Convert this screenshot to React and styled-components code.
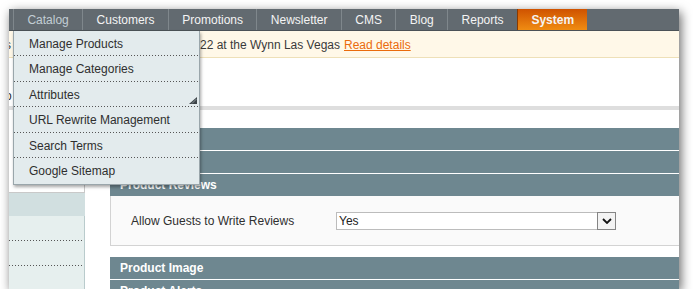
import React from 'react';
import styled, { createGlobalStyle } from 'styled-components';

const GlobalStyle = createGlobalStyle`
  html, body {
    margin: 0;
    padding: 0;
    background: #ffffff;
  }
  body {
    font-family: "Liberation Sans", Arial, sans-serif;
    font-size: 12px;
    color: #2f2f2f;
  }
`;

const Window = styled.div`
  margin: 9px 0 0 9px;
  width: 670px;
  height: 280px;
  overflow: hidden;
  background: #ffffff;
  box-shadow: 2px 3px 10px rgba(0, 0, 0, 0.6);
`;

const NavBar = styled.div`
  display: flex;
  height: 21px;
  background: #626a70;
  border-bottom: 1px solid #4b5257;
`;

const NavStub = styled.div`
  width: 4px;
`;

const NavItem = styled.div`
  display: flex;
  align-items: center;
  padding: 0 13.4px;
  border-left: 1px solid ${p => (p.$active ? '#8a3a00' : '#7f878c')};
  color: ${p => (p.$muted ? '#c3ced5' : '#f4f4f4')};
  font-weight: ${p => (p.$active ? 'bold' : 'normal')};
  background: ${p => (p.$active ? 'linear-gradient(#cf5200, #f08c12)' : 'transparent')};
  white-space: nowrap;
`;

const Body = styled.div`
  position: relative;
`;

const Notice = styled.div`
  display: flex;
  align-items: center;
  height: 27px;
  padding-top: 1px;
  box-sizing: border-box;
  background: #fff8e8;
  border-bottom: 1px solid #eee0b8;
  color: #3a3a3a;
  white-space: nowrap;
`;

const Hidden = styled.span`
  width: ${p => p.$width || 191}px;
  overflow: hidden;
  text-indent: -4px;
`;

const NoticeLink = styled.a`
  margin-left: 4px;
  color: #ea6b0c;
  text-decoration: underline;
`;

const Toolbar = styled.div`
  height: 48px;
  display: flex;
  align-items: flex-end;
  padding-bottom: 3px;
  box-sizing: border-box;
  overflow: hidden;
`;

const Divider = styled.div`
  height: 4px;
  background: #dedede;
`;

const Columns = styled.div`
  display: grid;
  grid-template-columns: 76px 1fr;
  column-gap: 25px;
`;

const Side = styled.div`
  display: flex;
  flex-direction: column;
`;

const SideBox = styled.div`
  height: 82px;
  border-right: 1px solid #c9c9c9;
  border-bottom: 1px solid #c9c9c9;
`;

const SideTitle = styled.div`
  height: 23px;
  background: #d1dfe0;
`;

const dots = `
  background-image: repeating-linear-gradient(to right, #555 0 1px, transparent 1px 3px);
  background-size: 100% 1px;
  background-repeat: no-repeat;
  background-position: left bottom;
`;

const SideItem = styled.div`
  height: 25px;
  background-color: #e6efee;
  border-right: 1px solid #b9cbcc;
  ${p => (p.$dotted ? dots : '')}
`;

const Main = styled.div`
  padding-top: 18px;
  display: flex;
  flex-direction: column;
`;

const SectionHead = styled.div`
  height: 22px;
  line-height: 22px;
  margin-top: ${p => (p.$gap ? '11px' : '0')};
  margin-bottom: 1px;
  padding-left: 10px;
  background: #6e8790;
  color: #ffffff;
  font-weight: bold;
  flex-shrink: 0;
`;

const SectionBody = styled.div`
  height: 49px;
  margin-top: -1px;
  background: #fafafa;
  border-left: 1px solid #d3d3d3;
  border-bottom: 1px solid #d3d3d3;
  display: flex;
  align-items: center;
  padding-left: 20px;
  flex-shrink: 0;
`;

const Label = styled.div`
  width: 205px;
  color: #2f2f2f;
`;

const Select = styled.div`
  width: 280px;
  height: 18px;
  box-sizing: border-box;
  border: 1px solid #bcbcbc;
  background: #ffffff;
  display: flex;
  align-items: center;
  justify-content: space-between;
  padding-left: 2px;
  color: #222;
`;

const SelectButton = styled.div`
  width: 19px;
  height: 18px;
  margin: -1px -1px -1px 0;
  box-sizing: border-box;
  border: 1px solid #858585;
  background: #f3f3f3;
  display: flex;
  align-items: center;
  justify-content: center;
`;

const Menu = styled.div`
  position: absolute;
  top: 0;
  left: 4px;
  width: 187px;
  height: 154px;
  box-sizing: border-box;
  background: #e3ebed;
  border: 1px solid #9aa6ab;
  border-top: none;
  box-shadow: 1px 2px 3px rgba(0, 0, 0, 0.35);
`;

const MenuItem = styled.div`
  position: relative;
  height: 25.4px;
  box-sizing: border-box;
  padding: 2px 0 0 15px;
  line-height: 22px;
  color: #2f2f2f;
  white-space: nowrap;
  ${p => (p.$last ? '' : dots)}
`;

const Grip = styled.svg`
  position: absolute;
  right: 2px;
  bottom: 3px;
`;

const navItems = ['Catalog', 'Customers', 'Promotions', 'Newsletter', 'CMS', 'Blog', 'Reports'];
const menuItems = [
  'Manage Products',
  'Manage Categories',
  'Attributes',
  'URL Rewrite Management',
  'Search Terms',
  'Google Sitemap',
];

export default function App() {
  return (
    <>
      <GlobalStyle />
      <Window>
        <NavBar>
          <NavStub />
          {navItems.map((item, i) => (
            <NavItem key={item} $muted={i === 0}>{item}</NavItem>
          ))}
          <NavItem $active>System</NavItem>
        </NavBar>
        <Body>
          <Notice>
            <Hidden>s</Hidden>
            <span>22 at the Wynn Las Vegas</span>
            <NoticeLink>Read details</NoticeLink>
          </Notice>
          <Toolbar>
            <Hidden $width={4}>o</Hidden>
          </Toolbar>
          <Divider />
          <Columns>
            <Side>
              <SideBox />
              <SideTitle />
              <SideItem $dotted />
              <SideItem $dotted />
              <SideItem />
            </Side>
            <Main>
              <SectionHead>Frontend</SectionHead>
              <SectionHead>Sitemap</SectionHead>
              <SectionHead>Product Reviews</SectionHead>
              <SectionBody>
                <Label>Allow Guests to Write Reviews</Label>
                <Select>
                  Yes
                  <SelectButton>
                    <svg width="10" height="6" viewBox="0 0 10 6">
                      <path d="M1 1 L5 5 L9 1" fill="none" stroke="#111" strokeWidth="1.8" />
                    </svg>
                  </SelectButton>
                </Select>
              </SectionBody>
              <SectionHead $gap>Product Image</SectionHead>
              <SectionHead>Product Alerts</SectionHead>
            </Main>
          </Columns>
          <Menu>
            {menuItems.map((item, i) => (
              <MenuItem key={item} $last={i === menuItems.length - 1}>
                {item}
                {item === 'Attributes' && (
                  <Grip width="8" height="7" viewBox="0 0 8 7">
                    <polygon points="8,0 8,7 0,7" fill="#3d4448" />
                    <line x1="3" y1="6.5" x2="7.5" y2="2" stroke="#9aa6ab" strokeWidth="0.8" />
                  </Grip>
                )}
              </MenuItem>
            ))}
          </Menu>
        </Body>
      </Window>
    </>
  );
}
